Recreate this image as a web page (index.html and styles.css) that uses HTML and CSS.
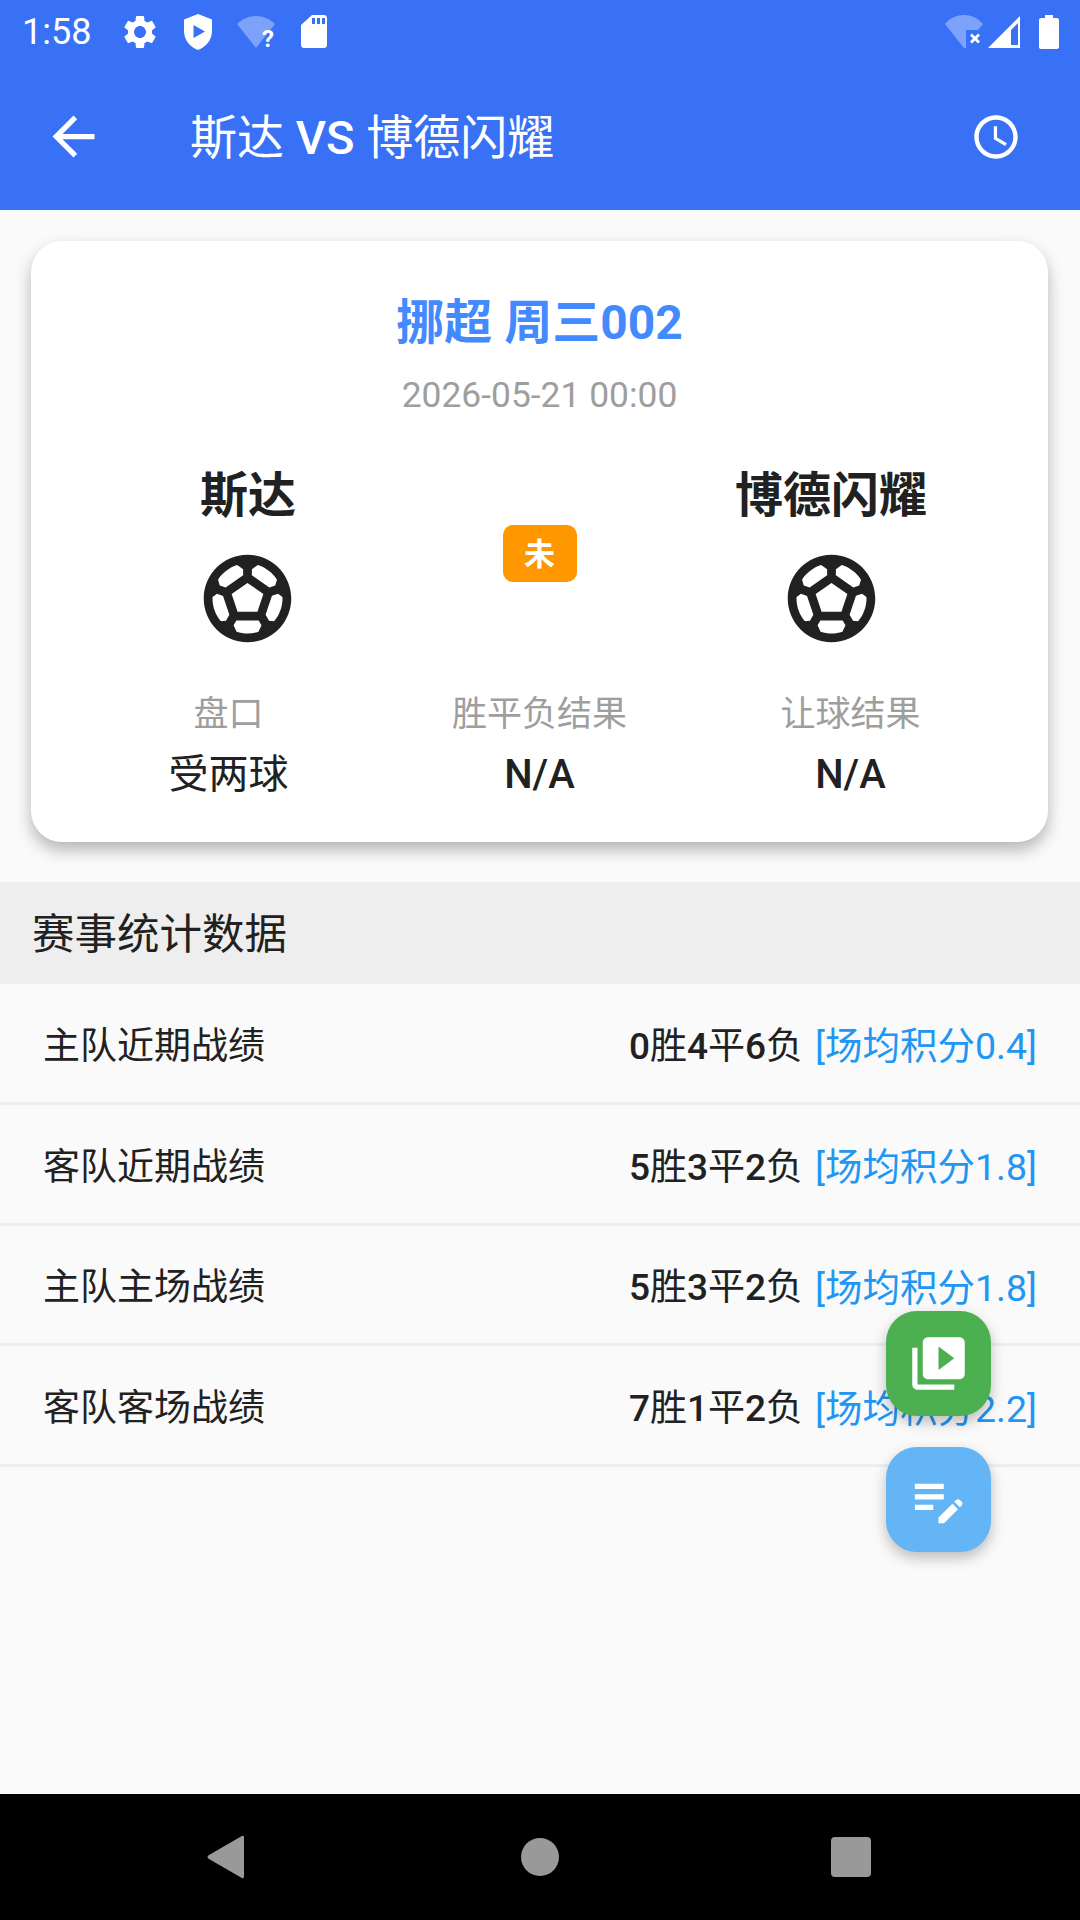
FILE: index.html
```html
<!DOCTYPE html>
<html lang="zh">
<head>
    <meta charset="UTF-8">
    <meta name="viewport" content="width=device-width, initial-scale=1.0">
    <title>斯达 VS 博德闪耀</title>
    <link rel="stylesheet" href="styles.css">
</head>
<body>
    <div class="screen">
        <header class="app-header">
            <div class="status-bar">
                <span class="status-time">1:58</span>
                <svg class="ic ic-gear" viewBox="0 0 24 24"><path d="M19.14 12.94c.04-.3.06-.61.06-.94 0-.32-.02-.64-.07-.94l2.03-1.58c.18-.14.23-.41.12-.61l-1.92-3.32c-.12-.22-.37-.29-.59-.22l-2.39.96c-.5-.38-1.03-.7-1.62-.94l-.36-2.54c-.04-.24-.24-.41-.48-.41h-3.84c-.24 0-.43.17-.47.41l-.36 2.54c-.59.24-1.13.57-1.62.94l-2.39-.96c-.22-.08-.47 0-.59.22L2.74 8.87c-.12.21-.08.47.12.61l2.03 1.58c-.05.3-.09.63-.09.94s.02.64.07.94l-2.03 1.58c-.18.14-.23.41-.12.61l1.92 3.32c.12.22.37.29.59.22l2.39-.96c.5.38 1.03.7 1.62.94l.36 2.54c.05.24.24.41.48.41h3.84c.24 0 .44-.17.47-.41l.36-2.54c.59-.24 1.13-.56 1.62-.94l2.39.96c.22.08.47 0 .59-.22l1.92-3.32c.12-.22.07-.47-.12-.61l-2.01-1.58zM12 15.6c-1.98 0-3.6-1.62-3.6-3.6s1.62-3.6 3.6-3.6 3.6 1.62 3.6 3.6-1.62 3.6-3.6 3.6z"/></svg>
                <svg class="ic ic-shield" viewBox="0 0 30 36"><path fill-rule="evenodd" d="M15 0L29 5.5V17C29 26 23 33 15 36C7 33 1 26 1 17V5.5ZM10.500 11V24L22 17.500Z"/></svg>
                <svg class="ic ic-wifi" viewBox="0 0 38 42"><path opacity=".35" d="M0 13C5 8 12 5 19 5S33 8 38 13L19 37Z"/><text x="25" y="36" class="wifi-q">?</text></svg>
                <svg class="ic ic-sd" viewBox="0 0 26 33"><path fill-rule="evenodd" d="M11 0H23C24.7 0 26 1.3 26 3V30C26 31.7 24.7 33 23 33H3C1.3 33 0 31.7 0 30V10ZM11 3V9H14V3ZM16 3V9H19V3ZM21 3V9H24V3Z"/></svg>
                <span class="status-spacer"></span>
                <svg class="ic ic-wifi-x" viewBox="0 0 38 33"><path opacity=".35" d="M0 9C5 3 12 0 19 0S33 3 38 9L33 15H21V33H19Z"/><path d="M25 20.5L27 18.500L30 21.500L33 18.500L35 20.500L32 23.500L35 26.500L33 28.500L30 25.500L27 28.500L25 26.500L28 23.500Z"/></svg>
                <svg class="ic ic-signal" viewBox="0 0 32 32"><path fill-rule="evenodd" d="M32 0V32H0ZM30 7L23 14V29H30Z"/></svg>
                <svg class="ic ic-battery" viewBox="0 0 20 34"><path d="M6 0H14V3H18C19.100 3 20 3.900 20 5V32C20 33.100 19.100 34 18 34H2C.9 34 0 33.100 0 32V5C0 3.900 .9 3 2 3H6Z"/></svg>
            </div>
            <div class="app-bar">
                <svg class="ic ic-back" viewBox="0 0 24 24"><path d="M20 11H7.83l5.590-5.590L12 4l-8 8 8 8 1.410-1.410L7.830 13H20v-2z"/></svg>
                <h1 class="app-title">斯达 <b>VS</b> 博德闪耀</h1>
                <svg class="ic ic-clock" viewBox="0 0 24 24"><path d="M11.990 2C6.470 2 2 6.480 2 12s4.470 10 9.990 10C17.520 22 22 17.520 22 12S17.520 2 11.990 2zM12 20c-4.420 0-8-3.580-8-8s3.580-8 8-8 8 3.580 8 8-3.580 8-8 8z"/><path d="M12.500 7H11v6l5.250 3.150.75-1.230-4.500-2.670z"/></svg>
            </div>
        </header>

        <main class="content">
            <section class="match-card">
                <div class="league">挪超 周三002</div>
                <div class="match-time">2026-05-21 00:00</div>

                <div class="teams">
                    <div class="team">
                        <div class="team-name">斯达</div>
                        <svg class="ball" viewBox="0 0 24 24"><path d="M12 2C6.480 2 2 6.480 2 12s4.480 10 10 10 10-4.480 10-10S17.520 2 12 2zm1 3.300l1.350-.95c1.820.56 3.370 1.760 4.380 3.340l-.39 1.340-1.350.46L13 6.700V5.300zm-3.350-.95L11 5.300v1.400L7.010 9.490l-1.350-.46-.39-1.340c1.010-1.570 2.560-2.770 4.380-3.340zM7.080 17.110l-1.140.1C4.730 15.810 4 13.990 4 12c0-.12.01-.23.02-.35l1-.73 1.380.48 1.460 4.340-.78 1.370zm7.420 2.480c-.79.26-1.630.41-2.500.41s-1.710-.15-2.500-.41l-.69-1.490.64-1.100h5.110l.64 1.110-.7 1.480zM14.270 15H9.730l-1.350-4.020L12 8.440l3.630 2.540L14.270 15zm3.790 2.210l-1.140-.1-.79-1.370 1.460-4.340 1.390-.47 1 .73c.01.11.02.22.02.34 0 1.990-.73 3.810-1.940 5.210z"/></svg>
                    </div>
                    <div class="match-state"><span class="state-badge">未</span></div>
                    <div class="team">
                        <div class="team-name">博德闪耀</div>
                        <svg class="ball" viewBox="0 0 24 24"><path d="M12 2C6.480 2 2 6.480 2 12s4.480 10 10 10 10-4.480 10-10S17.520 2 12 2zm1 3.300l1.350-.95c1.820.56 3.370 1.760 4.380 3.340l-.39 1.340-1.350.46L13 6.700V5.300zm-3.350-.95L11 5.300v1.400L7.010 9.490l-1.350-.46-.39-1.340c1.010-1.570 2.560-2.770 4.380-3.340zM7.080 17.110l-1.140.1C4.730 15.810 4 13.990 4 12c0-.12.01-.23.02-.35l1-.73 1.380.48 1.460 4.340-.78 1.370zm7.420 2.480c-.79.26-1.630.41-2.500.41s-1.710-.15-2.500-.41l-.69-1.490.64-1.100h5.110l.64 1.110-.7 1.480zM14.270 15H9.730l-1.350-4.020L12 8.440l3.630 2.540L14.270 15zm3.790 2.210l-1.140-.1-.79-1.370 1.460-4.340 1.390-.47 1 .73c.01.11.02.22.02.34 0 1.990-.73 3.810-1.940 5.210z"/></svg>
                    </div>
                </div>

                <div class="results">
                    <div class="result">
                        <div class="result-label">盘口</div>
                        <div class="result-value">受两球</div>
                    </div>
                    <div class="result">
                        <div class="result-label">胜平负结果</div>
                        <div class="result-value strong">N/A</div>
                    </div>
                    <div class="result">
                        <div class="result-label">让球结果</div>
                        <div class="result-value strong">N/A</div>
                    </div>
                </div>
            </section>

            <div class="section-title">赛事统计数据</div>

            <div class="stat-row">
                <span class="stat-name">主队近期战绩</span>
                <span class="stat-value"><b>0</b>胜<b>4</b>平<b>6</b>负</span>
                <span class="stat-avg">[场均积分0.4]</span>
            </div>
            <div class="stat-row">
                <span class="stat-name">客队近期战绩</span>
                <span class="stat-value"><b>5</b>胜<b>3</b>平<b>2</b>负</span>
                <span class="stat-avg">[场均积分1.8]</span>
            </div>
            <div class="stat-row">
                <span class="stat-name">主队主场战绩</span>
                <span class="stat-value"><b>5</b>胜<b>3</b>平<b>2</b>负</span>
                <span class="stat-avg">[场均积分1.8]</span>
            </div>
            <div class="stat-row">
                <span class="stat-name">客队客场战绩</span>
                <span class="stat-value"><b>7</b>胜<b>1</b>平<b>2</b>负</span>
                <span class="stat-avg">[场均积分2.2]</span>
            </div>

            <div class="fab-stack">
                <button class="fab fab-video">
                    <svg class="ic" viewBox="0 0 24 24"><path d="M4 6H2v14c0 1.100.9 2 2 2h14v-2H4V6zm16-4H8c-1.100 0-2 .9-2 2v12c0 1.100.9 2 2 2h12c1.100 0 2-.9 2-2V4c0-1.100-.9-2-2-2zm-8 12.500v-9l6 4.500-6 4.500z"/></svg>
                </button>
                <button class="fab fab-note">
                    <svg class="ic" viewBox="0 0 24 24"><path d="M3 10h11v2H3v-2zm0-2h11V6H3v2zm0 8h7v-2H3v2zm15.010-3.130l.71-.71c.39-.39 1.020-.39 1.410 0l.71.71c.39.39.39 1.020 0 1.410l-.71.71-2.120-2.120zm-.71.71l-5.300 5.300V21h2.120l5.300-5.300-2.120-2.120z"/></svg>
                </button>
            </div>
        </main>

        <nav class="nav-bar">
            <svg class="nav-btn" viewBox="0 0 40 44"><path d="M35 1.500C36.500 0 38 .8 38 2.500V41.500C38 43.200 36.500 44 35 42.500L3 24C1 22.800 1 21.200 3 20Z"/></svg>
            <svg class="nav-btn nav-home" viewBox="0 0 40 44"><circle cx="20" cy="22" r="19"/></svg>
            <svg class="nav-btn" viewBox="0 0 40 44"><rect x="0" y="2" width="40" height="40" rx="4"/></svg>
        </nav>
    </div>
</body>
</html>
```

FILE: styles.css
```css
:root {
    --primary-color: #3871f6;
    --league-color: #448aff;
    --link-color: #2196f3;
    --bg-color: #fafafa;
    --card-bg: #ffffff;
    --text-color: #212121;
    --text-secondary: #9e9e9e;
    --divider: #eeeeee;
}

* {
    margin: 0;
    padding: 0;
    box-sizing: border-box;
}

body {
    font-family: Roboto, "Noto Sans CJK SC", sans-serif;
    background-color: var(--bg-color);
    color: var(--text-color);
}

.screen {
    display: flex;
    flex-direction: column;
    width: 1080px;
    height: 1920px;
    overflow: hidden;
}

.ic {
    display: block;
    flex: none;
    fill: currentColor;
}

/* 顶部 */
.app-header {
    height: 210px;
    background: var(--primary-color);
    color: #ffffff;
}

.status-bar {
    display: flex;
    align-items: center;
    height: 63px;
    padding: 0 21px 0 22px;
}

.status-time {
    width: 98px;
    padding-top: 2px;
    font-size: 36px;
    line-height: 63px;
}

.ic-gear { width: 40px; height: 40px; }
.ic-shield { width: 30px; height: 36px; margin-left: 23px; }
.ic-wifi { width: 38px; height: 42px; margin-left: 24px; }
.ic-sd { width: 26px; height: 33px; margin-left: 26px; }
.ic-wifi-x { width: 38px; height: 33px; }
.ic-signal { width: 32px; height: 32px; margin-left: 5px; }
.ic-battery { width: 20px; height: 34px; margin-left: 19px; }

.wifi-q {
    font-size: 24px;
    font-weight: 700;
    fill: #ffffff;
}

.status-spacer {
    flex: 1;
}

.app-bar {
    display: flex;
    align-items: center;
    height: 147px;
    padding: 0 42px;
}

.ic-back {
    width: 63px;
    height: 63px;
}

.app-title {
    flex: 1;
    margin-left: 85px;
    padding-top: 2px;
    font-size: 47px;
    font-weight: 400;
    line-height: 63px;
}

.app-title b {
    font-weight: 500;
}

.ic-clock {
    width: 52px;
    height: 52px;
    margin-right: 16px;
}

/* 比赛卡片 */
.content {
    position: relative;
    flex: 1;
}

.match-card {
    height: 601px;
    margin: 31px 32px 40px 31px;
    padding: 49px 42px 0;
    background: var(--card-bg);
    border-radius: 31px;
    box-shadow: 0 8px 16px rgba(0, 0, 0, 0.28);
    text-align: center;
}

.league {
    font-size: 48px;
    font-weight: 700;
    line-height: 66px;
    color: var(--league-color);
}

.match-time {
    margin-top: 18px;
    font-size: 35.400px;
    line-height: 42px;
    color: var(--text-secondary);
}

.teams {
    display: grid;
    grid-template-columns: 3fr 2fr 3fr;
    margin-top: 47px;
}

.team {
    display: flex;
    flex-direction: column;
    align-items: center;
}

.team-name {
    font-size: 48px;
    font-weight: 700;
    line-height: 66px;
}

.ball {
    display: block;
    width: 105px;
    height: 105px;
    margin-top: 17px;
    fill: #212121;
}

.match-state {
    padding-top: 62px;
}

.state-badge {
    display: inline-block;
    width: 74px;
    height: 57px;
    background: #ff9800;
    border-radius: 10px;
    color: #ffffff;
    font-size: 31px;
    font-weight: 700;
    line-height: 59px;
}

.results {
    display: grid;
    grid-template-columns: repeat(3, 1fr);
    margin-top: 40px;
}

.result-label {
    font-size: 35px;
    line-height: 48px;
    color: var(--text-secondary);
}

.result-value {
    margin-top: 12px;
    font-size: 40px;
    line-height: 48px;
}

.result-value.strong {
    font-weight: 500;
}

/* 统计列表 */
.section-title {
    height: 102px;
    padding: 4px 0 0 32px;
    background: var(--divider);
    font-size: 42.500px;
    line-height: 98px;
}

.stat-row {
    display: flex;
    align-items: center;
    height: 120.800px;
    padding: 0 43px;
    border-bottom: 3px solid var(--divider);
    font-size: 37px;
}

.stat-name {
    flex: 1;
}

.stat-value b {
    font-weight: 500;
}

.stat-avg {
    margin-left: 12px;
    font-size: 37.500px;
    color: var(--link-color);
}

.fab-stack {
    position: absolute;
    top: 1101px;
    right: 89px;
    display: flex;
    flex-direction: column;
    gap: 31px;
}

.fab {
    display: flex;
    align-items: center;
    justify-content: center;
    width: 105px;
    height: 105px;
    border: none;
    border-radius: 31px;
    color: #ffffff;
    box-shadow: 0 6px 14px rgba(0, 0, 0, 0.25);
}

.fab .ic {
    width: 63px;
    height: 63px;
}

.fab-video {
    background: #4caf50;
}

.fab-note {
    background: #64b5f6;
}

/* 底部导航 */
.nav-bar {
    display: flex;
    align-items: center;
    height: 126px;
    padding-left: 206px;
    background: #000000;
}

.nav-btn {
    display: block;
    width: 40px;
    height: 44px;
    fill: #999999;
}

.nav-home {
    margin: 0 271px 0 274px;
}
```
